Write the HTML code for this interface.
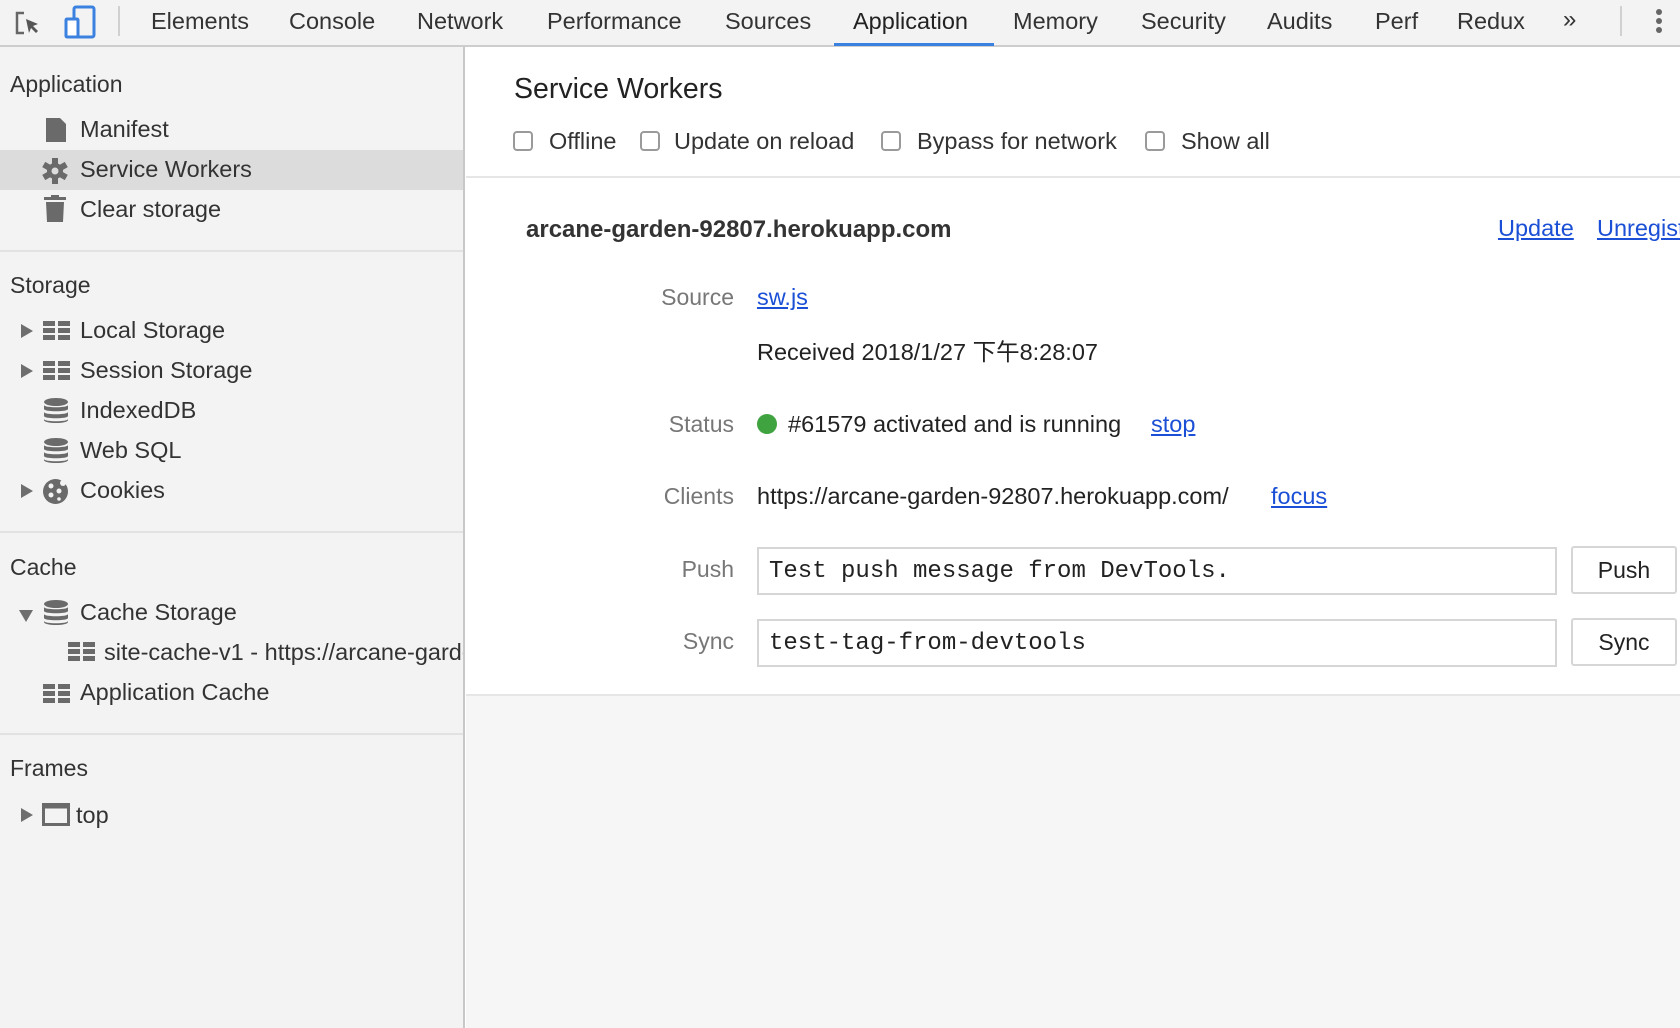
<!DOCTYPE html>
<html><head><meta charset="utf-8"><style>
*{margin:0;padding:0;box-sizing:border-box}
body{width:1680px;height:1028px;overflow:hidden;background:#fff;font-family:"Liberation Sans","Noto Sans CJK SC",sans-serif;font-size:23.5px;color:#222;position:relative}
.a{position:absolute;white-space:nowrap;line-height:1}
#tb{position:absolute;left:0;top:0;width:1680px;height:47px;background:#f3f3f3;border-bottom:2px solid #cdcdcd}
.tab{position:absolute;top:10px;color:#333;font-size:23.5px}
#side{position:absolute;left:0;top:47px;width:465px;height:981px;background:#f3f3f3;border-right:2px solid #c8c8c8}
.hd{color:#333;font-size:23px}
.it{color:#333;font-size:23.5px}
.sep{position:absolute;left:0;width:463px;height:2px;background:#e2e2e2}
.tri{position:absolute;width:0;height:0;border-top:7px solid transparent;border-bottom:7px solid transparent;border-left:12px solid #6e6e6e}
.lbl{position:absolute;right:946px;color:#777;font-size:23px;line-height:1}
a{color:#1a4fd6;text-decoration:underline}
.cb{position:absolute;width:20px;height:20px;border:2px solid #9a9a9a;border-radius:4px;background:#fff;top:131px}
.inp{position:absolute;left:757px;width:800px;border:2px solid #d6d6d6;background:#fff;font-family:"Liberation Mono",monospace;font-size:24px;padding-left:10px;padding-top:1px;color:#222}
.btn{position:absolute;left:1571px;width:106px;border:2px solid #d6d6d6;border-radius:3px;background:#fff;text-align:center;font-size:23px}
</style></head><body>
<div id="tb">
<svg class="a" style="left:14px;top:10px" width="28" height="28" viewBox="0 0 28 28"><path d="M10 3H3v20h7" fill="none" stroke="#666" stroke-width="2.5"/><path d="M12 9l12 5-5 2 5 5-2 2-5-5-2 5z" fill="#555"/></svg>
<svg class="a" style="left:64px;top:5px" width="34" height="34" viewBox="0 0 34 34"><rect x="10" y="2" width="20" height="30" rx="2" fill="none" stroke="#3b82e0" stroke-width="3"/><rect x="2" y="14" width="12" height="18" rx="1" fill="#fff" stroke="#3b82e0" stroke-width="3"/></svg>
<div class="a" style="left:118px;top:6px;width:2px;height:30px;background:#d0d0d0"></div>
<div class="a tab" style="left:151px">Elements</div>
<div class="a tab" style="left:289px">Console</div>
<div class="a tab" style="left:417px">Network</div>
<div class="a tab" style="left:547px">Performance</div>
<div class="a tab" style="left:725px">Sources</div>
<div class="a tab" style="left:853px;color:#222">Application</div>
<div class="a" style="left:834px;top:43px;width:160px;height:3px;background:#3b82e0"></div>
<div class="a tab" style="left:1013px">Memory</div>
<div class="a tab" style="left:1141px">Security</div>
<div class="a tab" style="left:1267px">Audits</div>
<div class="a tab" style="left:1375px">Perf</div>
<div class="a tab" style="left:1457px">Redux</div>
<div class="a tab" style="left:1563px;font-size:24px;top:8px">»</div>
<div class="a" style="left:1620px;top:6px;width:2px;height:30px;background:#d0d0d0"></div>
<div class="a" style="left:1656px;top:9px;width:6px;height:6px;border-radius:3px;background:#666;box-shadow:0 9px 0 #666,0 18px 0 #666"></div>
</div>

<div id="side">
<div class="a hd" style="left:10px;top:26px">Application</div>
<svg class="a" style="left:44px;top:70px" width="24" height="26" viewBox="0 0 24 26"><path d="M2 1h14l6 6v18H2z" fill="#6a6a6a"/></svg>
<div class="a it" style="left:80px;top:71px">Manifest</div>
<div class="a" style="left:0;top:103px;width:463px;height:40px;background:#dcdcdc"></div>
<svg class="a" style="left:41px;top:110px" width="28" height="28" viewBox="0 0 28 28"><g fill="#6a6a6a"><circle cx="14" cy="14" r="8"/><rect x="11" y="1" width="6" height="26"/><rect x="11" y="1" width="6" height="26" transform="rotate(60 14 14)"/><rect x="11" y="1" width="6" height="26" transform="rotate(120 14 14)"/></g><circle cx="14" cy="14" r="3.5" fill="#dcdcdc"/></svg>
<div class="a it" style="left:80px;top:111px">Service Workers</div>
<svg class="a" style="left:43px;top:148px" width="24" height="28" viewBox="0 0 24 28"><rect x="1" y="2" width="22" height="3" fill="#6a6a6a"/><rect x="8" y="0" width="8" height="3" fill="#6a6a6a"/><path d="M3 7h18l-1 20H4z" fill="#6a6a6a"/></svg>
<div class="a it" style="left:80px;top:151px">Clear storage</div>
<div class="sep" style="top:203px"></div>
<div class="a hd" style="left:10px;top:227px">Storage</div>

<div class="tri" style="left:21px;top:277px"></div>
<svg class="a" style="left:43px;top:274px" width="28" height="20"><g fill="#6a6a6a"><rect x="0" y="0" width="12" height="5"/><rect x="15" y="0" width="12" height="5"/><rect x="0" y="7" width="12" height="5"/><rect x="15" y="7" width="12" height="5"/><rect x="0" y="14" width="12" height="5"/><rect x="15" y="14" width="12" height="5"/></g></svg>
<div class="a it" style="left:80px;top:272px">Local Storage</div>
<div class="tri" style="left:21px;top:317px"></div>
<svg class="a" style="left:43px;top:314px" width="28" height="20"><g fill="#6a6a6a"><rect x="0" y="0" width="12" height="5"/><rect x="15" y="0" width="12" height="5"/><rect x="0" y="7" width="12" height="5"/><rect x="15" y="7" width="12" height="5"/><rect x="0" y="14" width="12" height="5"/><rect x="15" y="14" width="12" height="5"/></g></svg>
<div class="a it" style="left:80px;top:312px">Session Storage</div>
<svg class="a" style="left:43px;top:351px" width="26" height="26" viewBox="0 0 26 26"><g fill="#6a6a6a"><ellipse cx="13" cy="4" rx="12" ry="4"/><path d="M1 7c0 3 24 3 24 0v4c0 3-24 3-24 0z"/><path d="M1 14c0 3 24 3 24 0v4c0 3-24 3-24 0z"/><path d="M1 21c0 3 24 3 24 0v1c0 4-24 4-24 0z"/></g></svg>
<div class="a it" style="left:80px;top:352px">IndexedDB</div>
<svg class="a" style="left:43px;top:391px" width="26" height="26" viewBox="0 0 26 26"><g fill="#6a6a6a"><ellipse cx="13" cy="4" rx="12" ry="4"/><path d="M1 7c0 3 24 3 24 0v4c0 3-24 3-24 0z"/><path d="M1 14c0 3 24 3 24 0v4c0 3-24 3-24 0z"/><path d="M1 21c0 3 24 3 24 0v1c0 4-24 4-24 0z"/></g></svg>
<div class="a it" style="left:80px;top:392px">Web SQL</div>
<div class="tri" style="left:21px;top:437px"></div>
<svg class="a" style="left:42px;top:431px" width="27" height="27" viewBox="0 0 27 27"><circle cx="13.5" cy="13.5" r="12.5" fill="#6a6a6a"/><g fill="#f3f3f3"><circle cx="9" cy="8" r="2.5"/><circle cx="17" cy="13" r="2.5"/><circle cx="9" cy="17" r="2.5"/><circle cx="17" cy="21" r="1.8"/><circle cx="21" cy="5" r="3"/></g></svg>
<div class="a it" style="left:80px;top:432px">Cookies</div>
<div class="sep" style="top:484px"></div>
<div class="a hd" style="left:10px;top:509px">Cache</div>
<div class="tri" style="left:19px;top:563px;border:none;border-left:7px solid transparent;border-right:7px solid transparent;border-top:12px solid #6e6e6e"></div>
<svg class="a" style="left:43px;top:553px" width="26" height="26" viewBox="0 0 26 26"><g fill="#6a6a6a"><ellipse cx="13" cy="4" rx="12" ry="4"/><path d="M1 7c0 3 24 3 24 0v4c0 3-24 3-24 0z"/><path d="M1 14c0 3 24 3 24 0v4c0 3-24 3-24 0z"/><path d="M1 21c0 3 24 3 24 0v1c0 4-24 4-24 0z"/></g></svg>
<div class="a it" style="left:80px;top:554px">Cache Storage</div>
<div class="a" style="left:0;top:590px;width:463px;height:36px;overflow:hidden">
<svg class="a" style="left:68px;top:5px" width="28" height="20"><g fill="#6a6a6a"><rect x="0" y="0" width="12" height="5"/><rect x="15" y="0" width="12" height="5"/><rect x="0" y="7" width="12" height="5"/><rect x="15" y="7" width="12" height="5"/><rect x="0" y="14" width="12" height="5"/><rect x="15" y="14" width="12" height="5"/></g></svg>
<div class="a it" style="left:104px;top:4px">site-cache-v1 - https://arcane-garden-92807.herokuapp.com</div>
</div>
<svg class="a" style="left:43px;top:637px" width="28" height="20"><g fill="#6a6a6a"><rect x="0" y="0" width="12" height="5"/><rect x="15" y="0" width="12" height="5"/><rect x="0" y="7" width="12" height="5"/><rect x="15" y="7" width="12" height="5"/><rect x="0" y="14" width="12" height="5"/><rect x="15" y="14" width="12" height="5"/></g></svg>
<div class="a it" style="left:80px;top:634px">Application Cache</div>
<div class="sep" style="top:686px"></div>
<div class="a hd" style="left:10px;top:710px">Frames</div>
<div class="tri" style="left:21px;top:761px"></div>
<svg class="a" style="left:42px;top:756px" width="28" height="24"><rect x="1.5" y="1.5" width="25" height="20" fill="none" stroke="#6a6a6a" stroke-width="3"/><rect x="1.5" y="1.5" width="25" height="4" fill="#6a6a6a"/></svg>
<div class="a it" style="left:76px;top:757px">top</div>
</div>

<div class="a" style="left:466px;top:694px;width:1214px;height:334px;background:#f6f6f6;border-top:2px solid #e6e6e6"></div>
<div class="a" style="left:514px;top:75px;font-size:28.5px;color:#222">Service Workers</div>
<div class="cb" style="left:513px"></div><div class="a" style="left:549px;top:130px;color:#333">Offline</div>
<div class="cb" style="left:640px"></div><div class="a" style="left:674px;top:130px;color:#333">Update on reload</div>
<div class="cb" style="left:881px"></div><div class="a" style="left:917px;top:130px;color:#333">Bypass for network</div>
<div class="cb" style="left:1145px"></div><div class="a" style="left:1181px;top:130px;color:#333">Show all</div>
<div class="a" style="left:466px;top:176px;width:1214px;height:2px;background:#e6e6e6"></div>
<div class="a" style="left:526px;top:218px;font-weight:bold;font-size:24px;color:#333">arcane-garden-92807.herokuapp.com</div>
<div class="a" style="left:1498px;top:217px"><a>Update</a></div>
<div class="a" style="left:1597px;top:217px"><a>Unregister</a></div>

<div class="lbl" style="top:286px">Source</div>
<div class="a" style="left:757px;top:286px"><a>sw.js</a></div>
<div class="a" style="left:757px;top:341px">Received 2018/1/27 下午8:28:07</div>
<div class="lbl" style="top:413px">Status</div>
<div class="a" style="left:757px;top:414px;width:20px;height:20px;border-radius:10px;background:#3fa33f"></div>
<div class="a" style="left:788px;top:413px">#61579 activated and is running</div>
<div class="a" style="left:1151px;top:413px"><a>stop</a></div>
<div class="lbl" style="top:485px">Clients</div>
<div class="a" style="left:757px;top:485px">https://arcane-garden-92807.herokuapp.com/</div>
<div class="a" style="left:1271px;top:485px"><a>focus</a></div>
<div class="lbl" style="top:558px">Push</div>
<div class="inp" style="top:547px;height:48px;line-height:44px">Test push message from DevTools.</div>
<div class="btn" style="top:546px;height:48px;line-height:44px">Push</div>
<div class="lbl" style="top:630px">Sync</div>
<div class="inp" style="top:619px;height:48px;line-height:44px">test-tag-from-devtools</div>
<div class="btn" style="top:618px;height:48px;line-height:44px">Sync</div>
</body></html>
